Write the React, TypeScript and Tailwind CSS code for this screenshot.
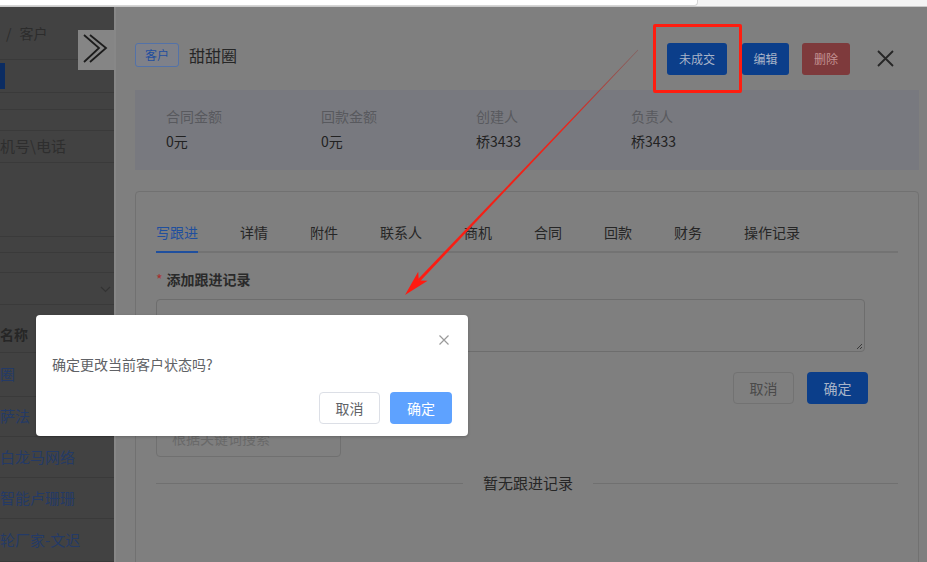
import React from "react";

const tabs = ["写跟进", "详情", "附件", "联系人", "商机", "合同", "回款", "财务", "操作记录"];

function SideRow({ h, children, className = "" }: { h: string; children?: React.ReactNode; className?: string }) {
  return <div className={`relative flex items-center border-b border-[#3a3a3a] ${h} ${className}`}>{children}</div>;
}

export default function App() {
  return (
    <div className="relative w-[927px] h-[562px] overflow-hidden bg-white font-['Noto_Sans_CJK_SC','Liberation_Sans',sans-serif]">
      {/* top browser strip */}
      <div className="h-[7px] bg-[#f4f4f4] border-b border-[#c9c9c9]">
        <div className="h-[6px] w-[698px] bg-white border-r border-b border-[#d6d6d6] rounded-br-[4px]" />
      </div>

      <div className="flex h-[555px]">
        {/* sidebar (dimmed) */}
        <div className="w-[114px] shrink-0 bg-[#424242] text-[14px]">
          <SideRow h="h-[53px]">
            <span className="ml-[6px] text-[#2c2c2c]">/</span>
            <span className="ml-[8px] text-[#2c2c2c]">客户</span>
          </SideRow>
          <SideRow h="h-[33px]">
            <div className="w-[5px] h-[26px] bg-[#0b2c62]" />
          </SideRow>
          <SideRow h="h-[17px]" />
          <SideRow h="h-[21px]" />
          <SideRow h="h-[32px]">
            <span className="text-[#2e2e2e] text-[15px]">机号\电话</span>
          </SideRow>
          <SideRow h="h-[74px]" />
          <SideRow h="h-[16px]" />
          <SideRow h="h-[20px]" />
          <SideRow h="h-[32px]">
            <svg className="absolute left-[100px] top-[13px]" width="11" height="7" viewBox="0 0 11 7">
              <polyline points="1,1 5.5,5.5 10,1" fill="none" stroke="#333" strokeWidth="1.2" />
            </svg>
          </SideRow>
          <SideRow h="h-[48px]" className="pt-[12px]">
            <span className="font-bold text-[#262626]">名称</span>
          </SideRow>
          <SideRow h="h-[44px]"><span className="text-[#243a66] text-[15px]">圈</span></SideRow>
          <SideRow h="h-[40px]"><span className="text-[#243a66] text-[15px]">萨法</span></SideRow>
          <SideRow h="h-[41px]"><span className="text-[#243a66] text-[15px]">白龙马网络</span></SideRow>
          <SideRow h="h-[41px]"><span className="text-[#243a66] text-[15px]">智能卢珊珊</span></SideRow>
          <SideRow h="h-[43px]"><span className="text-[#243a66] text-[15px]">轮厂家-文迟</span></SideRow>
        </div>

        {/* drawer (dimmed) */}
        <div className="relative flex-1 flex flex-col bg-[#7f7f7f] border-l-2 border-[#878787] pl-[19px] pr-[8px] overflow-hidden">
          {/* header */}
          <div className="mt-[36px] flex items-start">
            <div className="h-[24px] px-[9px] flex items-center border border-[#5372a8] rounded-[3px] text-[12px] text-[#1f4e9e] bg-[#7f8189]">
              客户
            </div>
            <div className="ml-[10px] leading-[24px] text-[16px] text-[#262626]">甜甜圈</div>
            <div className="ml-auto flex items-start">
              <div className="h-[32px] w-[60px] flex items-center justify-center rounded-[3px] bg-[#0b3e8a] text-[12px] text-[#a9b4c8]">未成交</div>
              <div className="ml-[15px] h-[32px] w-[47px] flex items-center justify-center rounded-[3px] bg-[#0b3e8a] text-[12px] text-[#a9b4c8]">编辑</div>
              <div className="ml-[13px] h-[32px] w-[48px] flex items-center justify-center rounded-[3px] bg-[#7e3a3c] text-[12px] text-[#c49393]">删除</div>
              <svg className="ml-[27px] mr-[25px] mt-[7px]" width="17" height="17" viewBox="0 0 17 17">
                <path d="M1 1 L16 16 M16 1 L1 16" stroke="#262626" strokeWidth="1.8" />
              </svg>
            </div>
          </div>

          {/* stats */}
          <div className="mt-[15px] h-[80px] shrink-0 bg-[#78797f] pl-[31px] flex text-[14px]">
            {[
              ["合同金额", "0元"],
              ["回款金额", "0元"],
              ["创建人", "桥3433"],
              ["负责人", "桥3433"],
            ].map(([k, v]) => (
              <div key={k} className="w-[155px] pt-[15px]">
                <div className="leading-[22px] text-[#58595e]">{k}</div>
                <div className="mt-[3px] leading-[22px] text-[#222]">{v}</div>
              </div>
            ))}
          </div>

          {/* card */}
          <div className="mt-[21px] h-[420px] shrink-0 border border-[#717171] rounded-[4px] px-[20px] pt-[20px]">
            <div className="h-[41px] flex gap-[42px] border-b-2 border-[#737373] text-[14px]">
              {tabs.map((t, i) => (
                <div key={t} className={`relative flex items-center pt-[2px] ${i === 0 ? "text-[#1f4f9e]" : "text-[#262626]"}`}>
                  {t}
                  {i === 0 && <div className="absolute left-0 right-0 bottom-[-2px] h-[2px] bg-[#1f4f9e]" />}
                </div>
              ))}
            </div>

            <div className="mt-[16px] leading-[20px] text-[14px] font-bold text-[#2a2a2a]">
              <span className="text-[#a83030] font-normal mr-[4px]">*</span>添加跟进记录
            </div>

            <div className="relative mt-[10px] w-[709px] h-[53px] border border-[#6d6d6d] rounded-[4px]">
              <svg className="absolute right-[1px] bottom-[1px]" width="7" height="7" viewBox="0 0 7 7">
                <path d="M6 1 L1 6 M6 4 L4 6" stroke="#3a3a3a" strokeWidth="1" />
              </svg>
            </div>

            <div className="mt-[20px] w-[712px] flex justify-end gap-[13px] text-[14px]">
              <div className="h-[32px] w-[61px] flex items-center justify-center border border-[#727272] rounded-[4px] text-[#4a4a4a]">取消</div>
              <div className="h-[32px] w-[61px] flex items-center justify-center rounded-[4px] bg-[#0b3e8a] text-[#a9b4c8]">确定</div>
            </div>

            <div className="mt-[16px] w-[185px] h-[37px] border border-[#707070] rounded-[4px] flex items-center pl-[15px] text-[14px] text-[#696969]">
              根据关键词搜索
            </div>

            <div className="mt-[15px] flex items-center">
              <div className="w-[307px] h-px bg-[#707070]" />
              <div className="px-[20px] text-[15px] text-[#262626] leading-[22px]">暂无跟进记录</div>
              <div className="flex-1 h-px bg-[#707070]" />
            </div>
          </div>
        </div>
      </div>

      {/* collapse tab */}
      <div className="absolute left-[78px] top-[30px] w-[36px] h-[40px] bg-[#858585]">
        <svg width="36" height="40" viewBox="0 0 36 40">
          <polyline points="6,5 21,18 6,32" fill="none" stroke="#1c1c1c" strokeWidth="1.8" />
          <polyline points="12,5 28,18 12,32" fill="none" stroke="#1c1c1c" strokeWidth="1.8" />
        </svg>
      </div>

      {/* dialog */}
      <div className="absolute left-[36px] top-[315px] w-[432px] h-[121px] bg-white rounded-[4px] shadow-[0_1px_3px_rgba(0,0,0,0.2)]">
        <svg className="absolute left-[403px] top-[20px]" width="10" height="10" viewBox="0 0 10 10">
          <path d="M0.5 0.5 L9.5 9.5 M9.5 0.5 L0.5 9.5" stroke="#9a9a9a" strokeWidth="1.2" />
        </svg>
        <div className="pt-[37px] pl-[16px] leading-[24px] text-[14px] text-[#606266]">确定更改当前客户状态吗?</div>
        <div className="mt-[16px] pr-[16px] flex justify-end gap-[10px] text-[14px]">
          <div className="h-[32px] w-[61px] flex items-center justify-center border border-[#dcdfe6] rounded-[4px] text-[#606266]">取消</div>
          <div className="h-[32px] w-[62px] flex items-center justify-center rounded-[4px] bg-[#5ea2ff] text-white">确定</div>
        </div>
      </div>

      {/* annotation: red box */}
      <div className="absolute left-[653px] top-[24px] w-[89px] h-[69px] border-[3px] border-[#ff1d10] rounded-[2px]" />

      {/* annotation: arrow */}
      <svg className="absolute left-0 top-0 pointer-events-none" width="927" height="562" viewBox="0 0 927 562">
        <defs>
          <linearGradient id="ag" gradientUnits="userSpaceOnUse" x1="638" y1="50" x2="405" y2="295">
            <stop offset="0" stopColor="#8a3a36" stopOpacity="0.5" />
            <stop offset="0.3" stopColor="#e8261c" />
            <stop offset="1" stopColor="#ff1a10" />
          </linearGradient>
        </defs>
        <polygon points="638.2,50.2 637.8,49.8 417.7,279.5 419.9,281.5" fill="url(#ag)" />
        <polygon points="405,295 418.2,271.7 418.8,280.5 427.6,280.7" fill="#ff1a10" />
      </svg>
    </div>
  );
}
